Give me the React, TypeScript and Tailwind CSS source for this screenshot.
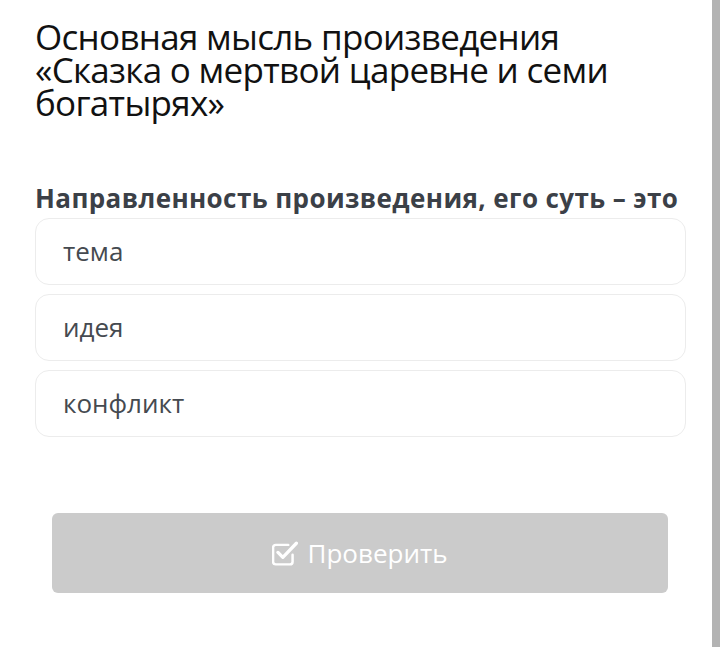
const OPTIONS = ["тема", "идея", "конфликт"]

function CheckSquareIcon() {
  // outlined square with a check that breaks out of the top-right corner
  return (
    <svg
      viewBox="0 0 24 24"
      fill="none"
      aria-hidden="true"
      className="w-[26px] h-[26px] shrink-0"
    >
      <path
        d="M19 13.5V20a2.5 2.5 0 0 1-2.5 2.5h-13A2.5 2.5 0 0 1 1 20V7a2.5 2.5 0 0 1 2.5-2.5H15"
        stroke="white"
        strokeWidth="2.3"
        strokeLinecap="round"
        strokeLinejoin="round"
      />
      <path
        d="M5.5 11.5l4.5 4.5L22.5 3"
        stroke="white"
        strokeWidth="3"
        strokeLinecap="round"
        strokeLinejoin="round"
      />
    </svg>
  )
}

export default function App() {
  return (
    <div className="flex h-[647px] w-[720px] bg-white font-['Open_Sans',sans-serif]">
      <div className="flex-1 flex flex-col pl-[35px] pr-[26px]">
        <h1 className="mt-[20px] text-[35px] leading-[33px] tracking-[-0.7px] text-[#111] font-normal">
          Основная мысль произведения «Сказка о мертвой царевне и семи богатырях»
        </h1>

        <p className="mt-[63px] text-[26px] leading-[33px] tracking-[0.4px] font-bold text-[#3b4047] whitespace-nowrap">
          Направленность произведения, его суть – это
        </p>

        <ul className="mt-[3px] flex flex-col gap-[9px]">
          {OPTIONS.map((opt) => (
            <li
              key={opt}
              className="h-[67px] flex items-center px-[27px] rounded-[14px] border border-[#ececec] text-[26px] text-[#454a50]"
            >
              {opt}
            </li>
          ))}
        </ul>

        <div className="mt-[76px] pl-[17px] pr-[18px]">
          <button className="w-full h-[80px] rounded-[6px] bg-[#cbcbcb] text-white text-[26px] flex items-center justify-center gap-[9px]">
            <CheckSquareIcon />
            <span>Проверить</span>
          </button>
        </div>
      </div>
      <div className="w-[8px] bg-[#b3b3b3]" />
    </div>
  )
}
